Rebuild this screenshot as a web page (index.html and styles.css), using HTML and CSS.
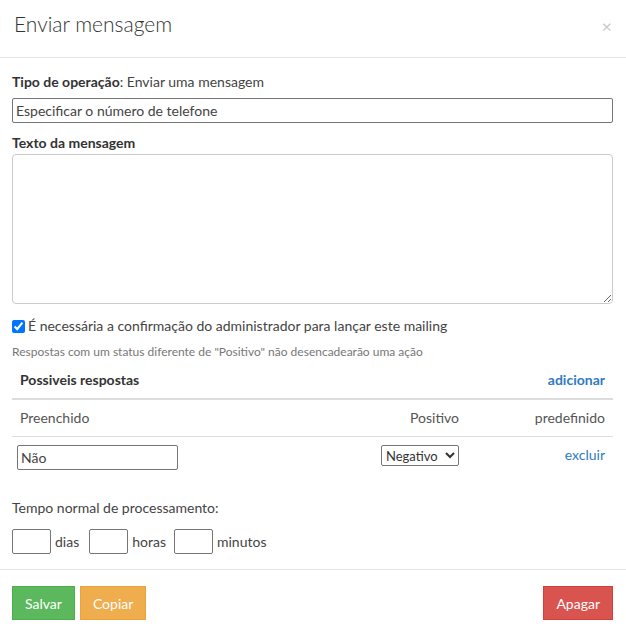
FILE: index.html
```html
<!DOCTYPE html>
<html lang="pt">
<head>
<meta charset="utf-8">
<title>Enviar mensagem</title>
<link rel="stylesheet" href="styles.css">
</head>
<body>
<div class="modal">
  <div class="modal-header">
    <h4 class="modal-title">Enviar mensagem</h4>
    <span class="close">&times;</span>
  </div>
  <div class="modal-body">
    <p class="op"><b>Tipo de operação</b>: Enviar uma mensagem</p>
    <input class="phone" type="text" value="Especificar o número de telefone">
    <div class="label">Texto da mensagem</div>
    <textarea class="msg"></textarea>
    <label class="check"><input type="checkbox" checked> É necessária a confirmação do administrador para lançar este mailing</label>
    <div class="hint">Respostas com um status diferente de "Positivo" não desencadearão uma ação</div>
    <table class="answers">
      <thead>
        <tr class="title-row">
          <th class="c1">Possiveis respostas</th>
          <th class="c2"></th>
          <th class="c3"><a class="add" href="#">adicionar</a></th>
        </tr>
      </thead>
      <tbody>
        <tr class="head-row">
          <td class="c1">Preenchido</td>
          <td class="c2">Positivo</td>
          <td class="c3">predefinido</td>
        </tr>
        <tr class="data-row">
          <td class="c1"><input class="ans" type="text" value="Não"></td>
          <td class="c2"><select class="sel"><option>Negativo</option><option>Positivo</option></select></td>
          <td class="c3"><a class="del" href="#">excluir</a></td>
        </tr>
      </tbody>
    </table>
    <div class="time-label">Tempo normal de processamento:</div>
    <div class="time">
      <input class="num" type="text"><span class="unit">dias</span>
      <input class="num" type="text"><span class="unit unit-h">horas</span>
      <input class="num" type="text"><span class="unit">minutos</span>
    </div>
  </div>
  <div class="modal-footer">
    <button class="btn green">Salvar</button>
    <button class="btn orange">Copiar</button>
    <span class="spacer"></span>
    <button class="btn red">Apagar</button>
  </div>
</div>
</body>
</html>
```
FILE: styles.css
```css
* { box-sizing: border-box; }
html, body { margin: 0; padding: 0; background: #fff; }
body {
  font-family: Lato, "Liberation Sans", sans-serif;
  font-size: 14px;
  color: #444;
  width: 626px;
}
.modal { width: 626px; }
.modal-header {
  display: flex;
  align-items: flex-start;
  justify-content: space-between;
  height: 58px;
  padding: 10px 14px 0 14px;
  border-bottom: 1px solid #e5e5e5;
}
.modal-title {
  margin: 0;
  font-size: 21px;
  font-weight: 300;
  line-height: 28px;
  color: #333;
}
.close {
  font-size: 18px;
  line-height: 18px;
  color: #c8c8c8;
  margin-top: 7px;
}
.modal-body { padding: 15px 13px 15px 12px; }
.op { margin: 0 0 7px; line-height: 18px; }
.op b { font-weight: 700; color: #333; }
.phone {
  display: block;
  width: 100%;
  height: 25px;
  border: 1px solid #767676;
  border-radius: 2px;
  padding: 0 3px;
  font: inherit;
  color: #444;
  margin: 0 0 11px;
}
.label { font-weight: 700; color: #333; line-height: 18px; margin-bottom: 2px; }
.msg {
  display: block;
  width: 100%;
  height: 150px;
  border: 1px solid #ccc;
  border-radius: 4px;
  resize: vertical;
  margin: 0 0 13px;
}
.check {
  display: flex;
  align-items: center;
  gap: 3px;
  line-height: 18px;
}
.check input { margin: 0; width: 13px; height: 13px; }
.hint {
  margin-top: 9px;
  font-size: 12px;
  line-height: 16px;
  color: #777;
}
.answers {
  width: 100%;
  border-collapse: collapse;
  margin-top: 2px;
}
.answers th, .answers td {
  padding: 8px;
  line-height: 20px;
  vertical-align: middle;
}
.answers th { font-weight: 700; color: #333; text-align: left; border-bottom: 2px solid #ddd; }
.answers .c2, .answers .c3 { text-align: right; }
.answers .c2 { width: 130px; }
.answers .c3 { width: 146px; }
.head-row td { border-bottom: 1px solid #ddd; color: #555; }
.data-row td { vertical-align: top; }
.add { color: #2f7bbf; font-weight: 700; text-decoration: none; }
.del { color: #2f7bbf; text-decoration: none; line-height: 18px; display: inline-block; }
.ans {
  width: 161px;
  height: 25px;
  border: 1px solid #767676;
  border-radius: 2px;
  padding: 0 3px;
  font: inherit;
  color: #444;
  margin-left: -3px;
  display: block;
}
.sel {
  height: 21px;
  width: 78px;
  font: inherit;
  font-size: 13px;
  border: 1px solid #767676;
  border-radius: 2px;
  color: #333;
  background: #fff;
}
.time-label { margin-top: 21px; line-height: 18px; }
.time { display: flex; align-items: center; margin-top: 12px; }
.num {
  width: 39px;
  height: 25px;
  border: 1px solid #767676;
  border-radius: 2px;
  font: inherit;
}
.unit { margin: 0 10px 0 4px; }
.unit-h { margin-right: 8px; }
.modal-footer {
  display: flex;
  align-items: center;
  gap: 5px;
  border-top: 1px solid #e5e5e5;
  padding: 16px 13px 12px 12px;
}
.spacer { flex: 1; }
.btn {
  height: 34px;
  padding: 0 12px;
  border: 1px solid;
  border-radius: 0;
  font-family: inherit;
  font-size: 14px;
  color: #fff;
}
.green { background: #5cb85c; border-color: #4cae4c; }
.orange { background: #f0ad4e; border-color: #eea236; }
.red { background: #d9534f; border-color: #d43f3a; }
```
